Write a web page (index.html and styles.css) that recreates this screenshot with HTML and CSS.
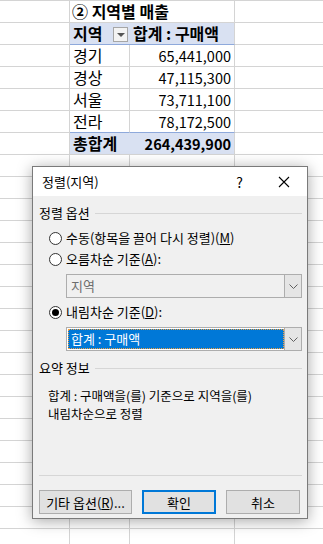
FILE: index.html
```html
<!DOCTYPE html>
<html>
	<head>
		<meta charset="UTF-8">
		<title>정렬(지역)</title>
		<link rel="stylesheet" href="styles.css">
	</head>
	<body>
		<div class="sheet">
			<div class="pivot">
				<div class="title">② 지역별 매출</div>
				<div class="hd hd-key">지역<span class="filter"></span></div>
				<div class="hd hd-val">합계 : 구매액</div>
				<div class="key">경기</div><div class="val">65,441,000</div>
				<div class="key">경상</div><div class="val">47,115,300</div>
				<div class="key">서울</div><div class="val">73,711,100</div>
				<div class="key last">전라</div><div class="val last">78,172,500</div>
				<div class="tot">총합계</div><div class="tot tot-val">264,439,900</div>
			</div>
		</div>

		<div class="dialog">
			<div class="dlg-title">
				<span class="dlg-name">정렬(지역)</span>
				<span class="dlg-help">?</span>
				<svg class="dlg-close" width="12" height="12" viewBox="0 0 12 12">
					<path d="M1 1 L11 11 M11 1 L1 11" stroke="#000" stroke-width="1.1" fill="none"/>
				</svg>
			</div>
			<div class="dlg-body">
				<div class="group">정렬 옵션</div>
				<div class="radio r1"><span class="dot"></span>수동(항목을 끌어 다시 정렬)(<u>M</u>)</div>
				<div class="radio r2"><span class="dot"></span>오름차순 기준(<u>A</u>):</div>
				<div class="combo disabled">
					<span class="combo-text">지역</span>
					<span class="combo-btn"><svg width="9" height="5" viewBox="0 0 9 5"><path d="M0.5 0.5 L4.5 4.5 L8.5 0.5" stroke="#606060" fill="none"/></svg></span>
				</div>
				<div class="radio r3"><span class="dot on"></span>내림차순 기준(<u>D</u>):</div>
				<div class="combo">
					<span class="combo-text sel">합계 : 구매액</span>
					<span class="combo-btn"><svg width="9" height="5" viewBox="0 0 9 5"><path d="M0.5 0.5 L4.5 4.5 L8.5 0.5" stroke="#606060" fill="none"/></svg></span>
				</div>
				<div class="group g2">요약 정보</div>
				<p class="summary">합계 : 구매액을(를) 기준으로 지역을(를)<br>내림차순으로 정렬</p>
				<div class="sep"></div>
				<div class="buttons">
					<button class="btn btn-more">기타 옵션(<u>R</u>)...</button>
					<button class="btn btn-ok">확인</button>
					<button class="btn btn-cancel">취소</button>
				</div>
			</div>
		</div>
	</body>
</html>
```

FILE: styles.css
```css
* {margin: 0; padding: 0; box-sizing: border-box;}
body {
	width: 323px;
	height: 544px;
	overflow: hidden;
	position: relative;
	font-family: "Noto Sans CJK KR", "Noto Sans", sans-serif;
	background: #fff;
}
.sheet {
	height: 544px;
	padding: 1px 0 0 70px;
	background:
		linear-gradient(#d4d4d4, #d4d4d4) 69px 0 / 1px 100% no-repeat,
		linear-gradient(#d4d4d4, #d4d4d4) 129px 0 / 1px 100% no-repeat,
		linear-gradient(#d4d4d4, #d4d4d4) 234px 0 / 1px 100% no-repeat,
		repeating-linear-gradient(to bottom, #d4d4d4 0 1px, #fff 1px 22px);
}
.pivot {
	display: grid;
	grid-template-columns: 60px 105px;
	grid-auto-rows: 22px;
	font-size: 16px;
	line-height: 21px;
	color: #000;
}
.pivot div {
	border-bottom: 1px solid #d4d4d4;
	background: #fff;
	padding: 0 3px;
	white-space: nowrap;
}
.pivot .title {
	grid-column: span 2;
	font-weight: bold;
	border-right: 1px solid #d4d4d4;
	padding-left: 2px;
}
.pivot .hd {
	background: #d9e1f2;
	font-weight: bold;
	border-bottom-color: #8ea9db;
}
.pivot .hd-key {
	display: flex;
	align-items: center;
	justify-content: space-between;
	padding-right: 2px;
}
.filter {
	width: 15px;
	height: 15px;
	border: 1px solid #a6a6a6;
	background: #f3f3f3;
	position: relative;
	margin-top: 1px;
}
.filter::after {
	content: "";
	position: absolute;
	left: 3px;
	top: 5px;
	border-left: 4px solid transparent;
	border-right: 4px solid transparent;
	border-top: 4px solid #555;
}
.pivot .hd-val {
	border-right: 1px solid #d4d4d4;
	padding-left: 3px;
}
.pivot .key {border-right: 1px solid #d4d4d4;}
.pivot .val {
	border-right: 1px solid #d4d4d4;
	text-align: right;
	font-size: 14.5px;
}
.pivot .last {border-bottom-color: #8ea9db;}
.pivot .tot {
	background: #d9e1f2;
	font-weight: bold;
}
.pivot .tot-val {
	text-align: right;
	border-right: 1px solid #d4d4d4;
	font-size: 14.5px;
}

/* dialog */
.dialog {
	position: absolute;
	left: 32px;
	top: 166px;
	width: 276px;
	height: 353px;
	border: 1px solid #7a7a7a;
	background: #f0f0f0;
	box-shadow: 0 2px 14px rgba(0,0,0,0.35);
	font-size: 13px;
	color: #000;
}
.dlg-title {
	height: 29px;
	background: #fff;
	display: flex;
	align-items: center;
	padding-left: 9px;
}
.dlg-name {flex: 1;}
.dlg-help {
	font-size: 14px;
	margin-right: 35px;
}
.dlg-close {margin-right: 17px;}
.dlg-body {
	padding: 0 5px 0 6px;
}
.group {
	display: flex;
	align-items: center;
	height: 16px;
	margin-top: 9px;
	line-height: 16px;
}
.group::after {
	content: "";
	flex: 1;
	height: 1px;
	background: #d6d6d6;
	margin-left: 5px;
}
.radio {
	display: flex;
	align-items: center;
	height: 16px;
	line-height: 16px;
	padding-left: 10px;
}
.r1 {margin-top: 9px;}
.r2 {margin-top: 5px;}
.r3 {margin-top: 6px;}
.dot {
	width: 13px;
	height: 13px;
	border: 1px solid #333;
	border-radius: 50%;
	background: #fff;
	margin-right: 4px;
	position: relative;
}
.dot.on::after {
	content: "";
	position: absolute;
	left: 2px;
	top: 2px;
	width: 7px;
	height: 7px;
	border-radius: 50%;
	background: #000;
}
.combo {
	margin: 7px 0 0 27px;
	height: 24px;
	border: 1px solid #adadad;
	background: #fff;
	display: flex;
	padding: 1px;
}
.combo.disabled {
	background: #f0f0f0;
	color: #6d6d6d;
}
.combo-text {
	flex: 1;
	line-height: 20px;
	padding-left: 3px;
}
.combo-text.sel {
	background: #0078d7;
	color: #fff;
	outline: 1px dotted #f0a040;
	outline-offset: -1px;
}
.combo-btn {
	width: 17px;
	margin: -1px -1px -1px 0;
	border-left: 1px solid #adadad;
	background: #e5e5e5;
	display: flex;
	align-items: center;
	justify-content: center;
}
.combo.disabled .combo-btn {margin-left: 0;}
.g2 {margin-top: 9px;}
.summary {
	margin: 11px 0 0 9px;
	font-size: 12.5px;
	line-height: 18px;
}
.sep {
	height: 1px;
	background: #d6d6d6;
	margin-top: 52px;
}
.buttons {
	display: flex;
	margin-top: 14px;
}
.btn {
	height: 24px;
	border: 1px solid #adadad;
	background: #e1e1e1;
	font-family: inherit;
	font-size: 13px;
	color: #000;
}
.btn-more {width: 93px;}
.btn-ok {
	width: 74px;
	margin-left: 10px;
	border: 2px solid #0078d7;
}
.btn-cancel {
	width: 74px;
	margin-left: 10px;
}
```
